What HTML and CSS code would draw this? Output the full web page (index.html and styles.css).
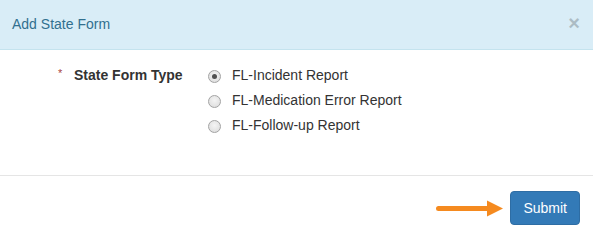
FILE: index.html
```html
<!DOCTYPE html>
<html>
<head>
<meta charset="utf-8">
<link rel="stylesheet" href="styles.css">
</head>
<body>
<div class="modal">
  <div class="modal-header">
    <h4 class="modal-title">Add State Form</h4>
    <button class="close" type="button">&times;</button>
  </div>
  <div class="modal-body">
    <div class="form-row">
      <div class="label-col">
        <span class="req">*</span>
        <span class="label">State Form Type</span>
      </div>
      <div class="options">
        <label class="option"><span class="radio checked"></span>FL-Incident Report</label>
        <label class="option"><span class="radio"></span>FL-Medication Error Report</label>
        <label class="option"><span class="radio"></span>FL-Follow-up Report</label>
      </div>
    </div>
  </div>
  <div class="modal-footer">
    <svg class="arrow" width="68" height="17" viewBox="0 0 68 17">
      <line x1="2.5" y1="8.5" x2="54" y2="8.5" stroke="#f58a1f" stroke-width="5" stroke-linecap="round"/>
      <polygon points="51,0.5 67,8.5 51,16.5" fill="#f58a1f"/>
    </svg>
    <button class="btn" type="button">Submit</button>
  </div>
</div>
</body>
</html>
```
FILE: styles.css
```css
* { box-sizing: border-box; }
html, body {
  margin: 0;
  padding: 0;
  background: #fff;
  font-family: "Liberation Sans", Arial, sans-serif;
  font-size: 14px;
  color: #333;
}
.modal { width: 593px; }
.modal-header {
  background: #d9edf7;
  border-bottom: 1px solid #c4e3ee;
  padding: 14px 13px 15px 12px;
  height: 50px;
  display: flex;
  align-items: center;
  justify-content: space-between;
}
.modal-title {
  margin: 0;
  font-size: 14px;
  font-weight: normal;
  line-height: 20px;
  color: #31708f;
}
.close {
  border: 0;
  background: transparent;
  padding: 0;
  font-family: "Liberation Sans", Arial, sans-serif;
  font-size: 20px;
  font-weight: bold;
  line-height: 20px;
  color: #000;
  opacity: 0.2;
  margin-top: -2px;
}
.modal-body {
  padding: 13px 15px 37px 15px;
  height: 175px;
  height: auto;
}
.form-row {
  display: flex;
}
.label-col {
  width: 193px;
  padding-left: 43px;
  display: flex;
  align-items: flex-start;
  line-height: 25px;
}
.req {
  color: #a94442;
  font-size: 11px;
  line-height: 20px;
  width: 16px;
}
.label {
  font-weight: bold;
}
.options {
  display: flex;
  flex-direction: column;
}
.option {
  display: flex;
  align-items: center;
  height: 25px;
  line-height: 25px;
}
.radio {
  width: 13px;
  height: 13px;
  border-radius: 50%;
  border: 1px solid #a3a3a3;
  background: radial-gradient(circle at 50% 40%, #f4f4f4 0%, #e2e2e2 70%, #d4d4d4 100%);
  margin-right: 11px;
  margin-top: 1px;
  position: relative;
  flex: none;
}
.radio.checked::after {
  content: "";
  position: absolute;
  left: 3px;
  top: 3px;
  width: 5px;
  height: 5px;
  border-radius: 50%;
  background: #505050;
}
.modal-footer {
  border-top: 1px solid #e5e5e5;
  padding: 15px 13px 13px 15px;
  display: flex;
  justify-content: flex-end;
  align-items: center;
}
.arrow {
  margin-right: 6px;
  margin-top: 1px;
  display: block;
}
.btn {
  font-family: "Liberation Sans", Arial, sans-serif;
  font-size: 14px;
  line-height: 20px;
  padding: 6px 12px;
  color: #fff;
  background: #337ab7;
  border: 1px solid #2e6da4;
  border-radius: 4px;
  height: 34px;
}
```
